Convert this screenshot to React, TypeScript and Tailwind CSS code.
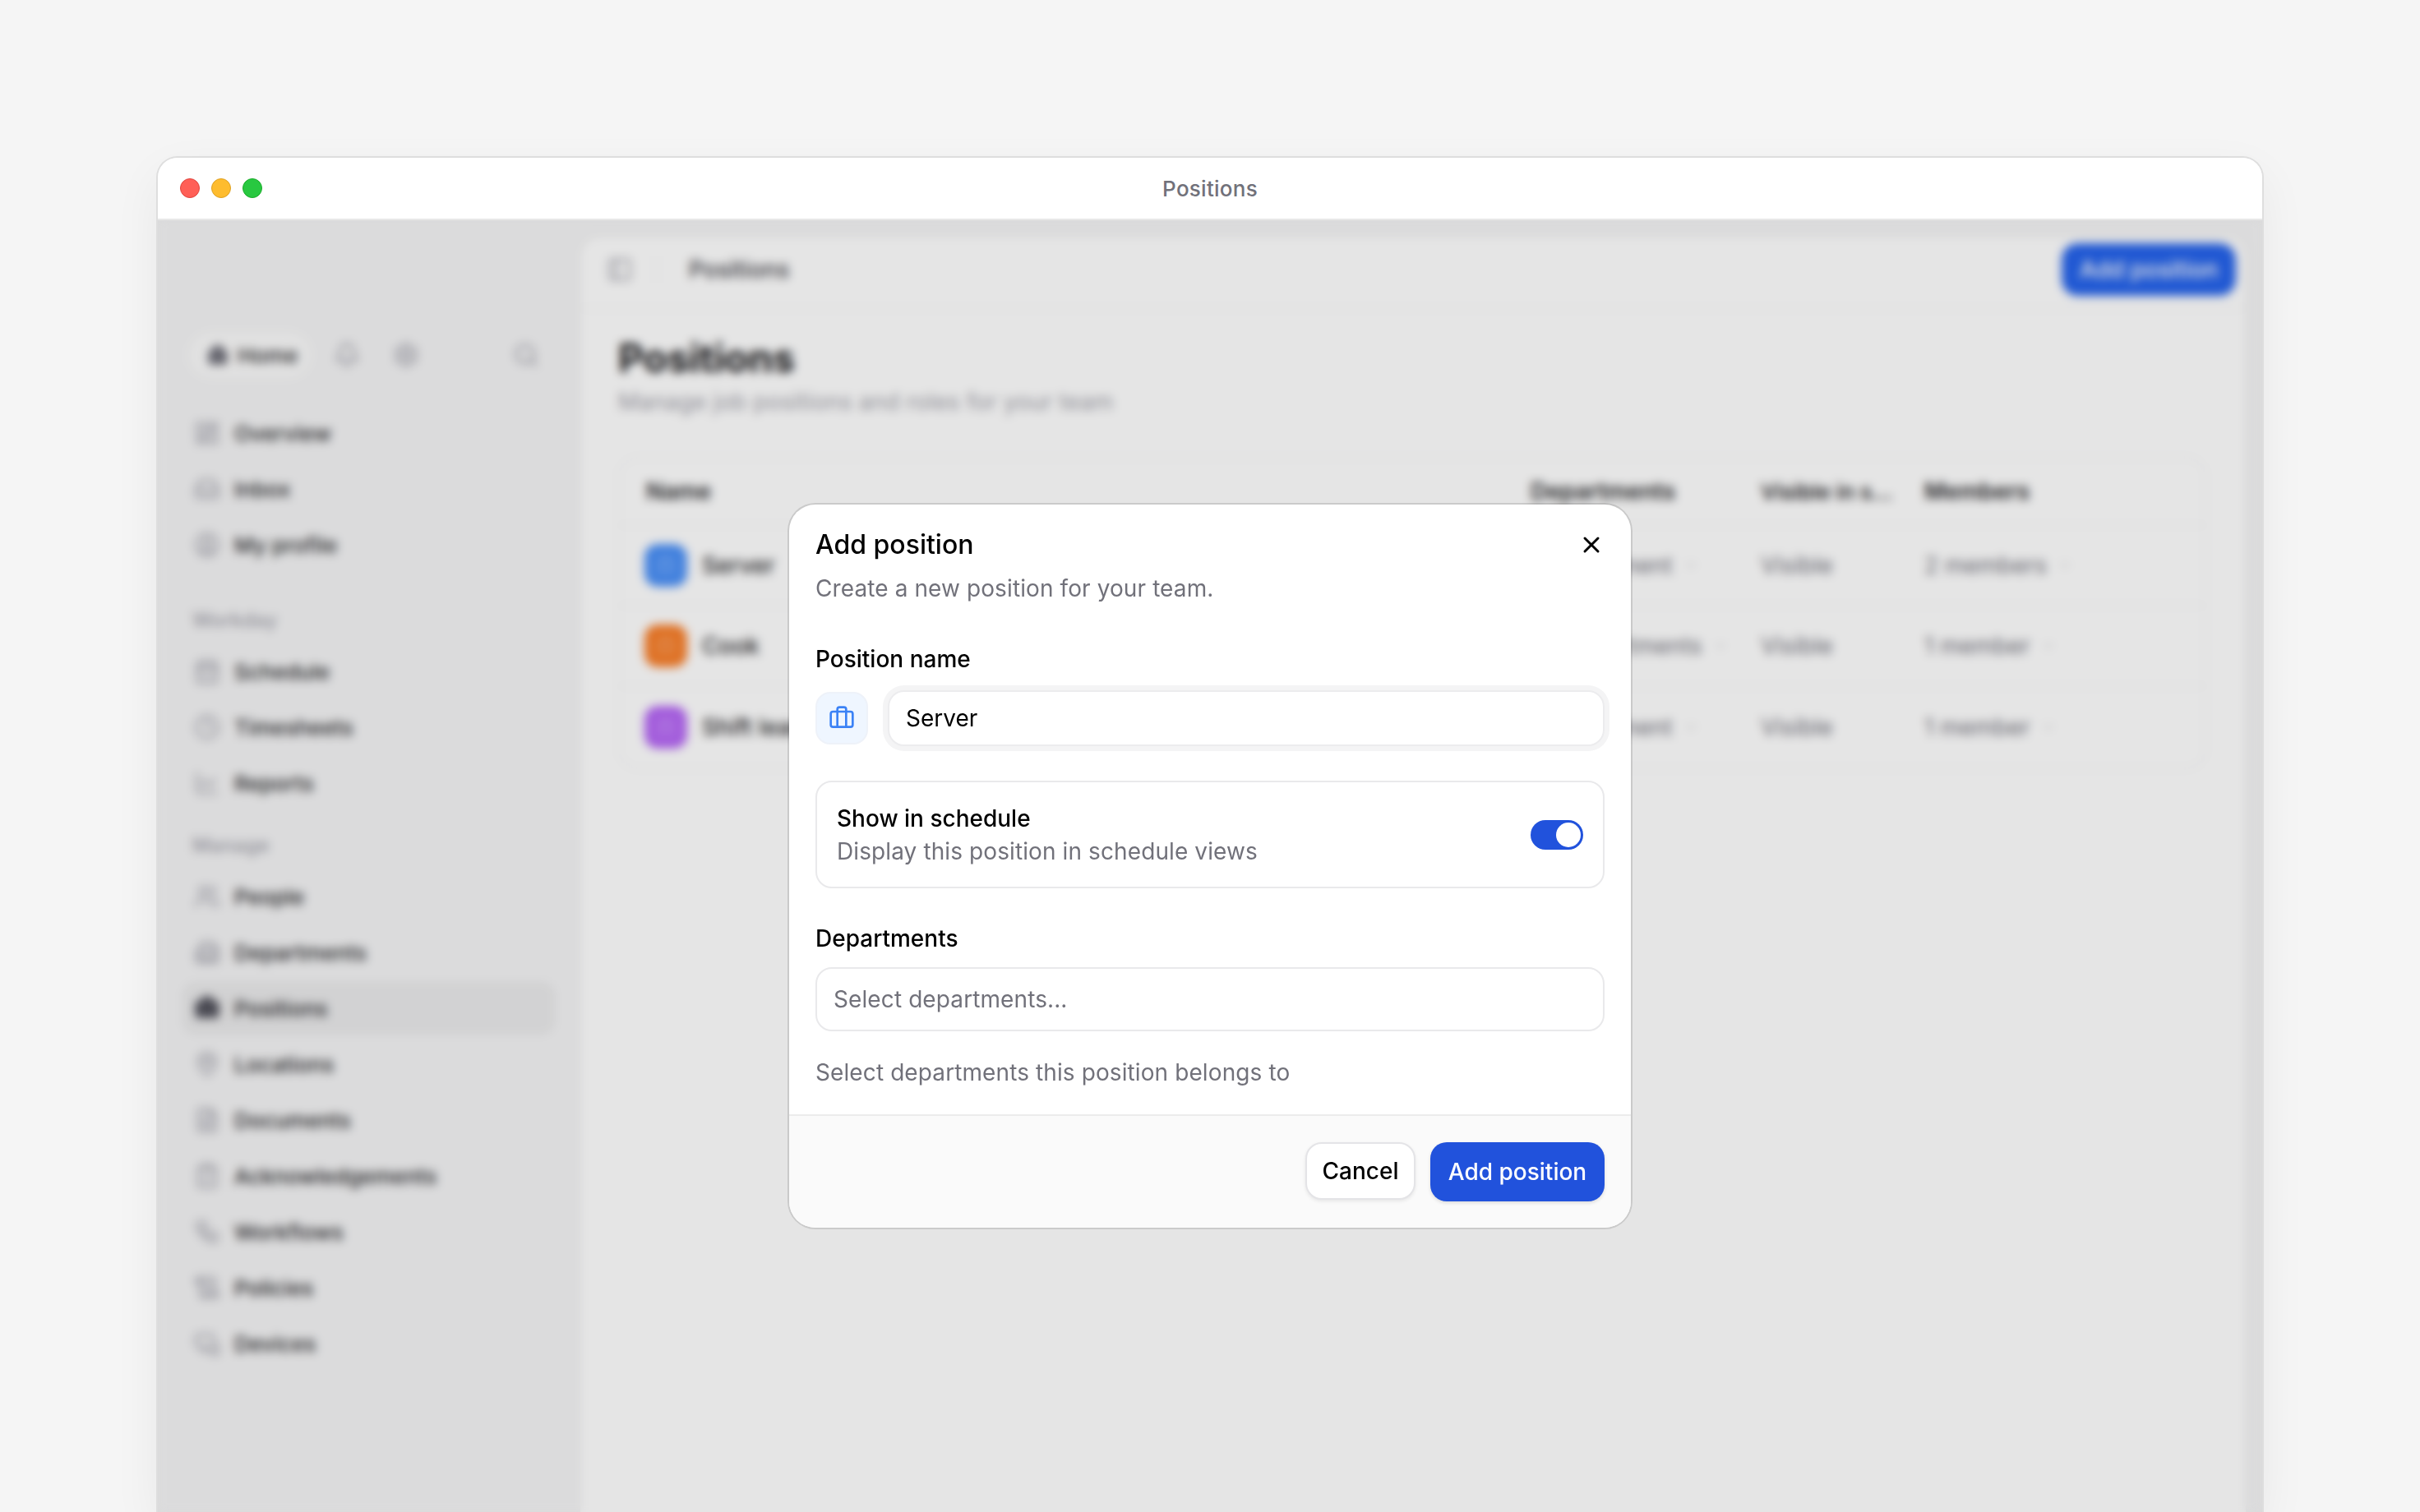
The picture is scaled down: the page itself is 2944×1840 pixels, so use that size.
import React from "react";
import {
  Home, Bell, Settings, Search, LayoutDashboard, Inbox, CircleUser, CalendarDays, Clock, ChartLine,
  Users, Building2, Briefcase, MapPin, FileText, ClipboardCheck, Workflow, ScrollText, MonitorSmartphone,
  PanelLeft, ChevronDown, X,
} from "lucide-react";

const font = { fontFamily: "Inter, 'Noto Sans', sans-serif" };

function NavRow({ icon: Icon, label, active }: { icon: React.ComponentType<any>; label: string; active?: boolean }) {
  return (
    <div className={`my-[2px] flex h-[64px] items-center gap-[17px] rounded-[16px] pl-[14px] text-zinc-800 ${active ? "bg-black/[0.04]" : ""}`}>
      <Icon size={32} className={active ? "text-zinc-600" : "text-zinc-400"} fill={active ? "currentColor" : "none"} />
      <span className="text-[26px] font-medium">{label}</span>
    </div>
  );
}

function SectionLabel({ children, className }: { children: React.ReactNode; className: string }) {
  return <div className={`flex h-[40px] items-center pl-[12px] text-[24px] font-medium tracking-[0.2px] text-zinc-400 ${className}`}>{children}</div>;
}

function Sidebar() {
  return (
    <aside className="w-[514px] shrink-0 pt-[136px]">
      <div className="flex items-center pl-[37px] pr-[38px]">
        <div className="flex h-[56px] w-[150px] items-center gap-[10px] rounded-full bg-white/60 pl-[22px] text-zinc-800">
          <Home size={28} fill="currentColor" className="text-zinc-500" />
          <span className="text-[26px] font-medium">Home</span>
        </div>
        <Bell size={32} className="ml-[27px] text-zinc-400" />
        <Settings size={32} className="ml-[40px] text-zinc-400" />
        <Search size={32} className="ml-auto mr-[12px] text-zinc-400" />
      </div>
      <nav className="mt-[33px] ml-[30px] flex w-[453px] flex-col">
        <NavRow icon={LayoutDashboard} label="Overview" />
        <NavRow icon={Inbox} label="Inbox" />
        <NavRow icon={CircleUser} label="My profile" />
        <SectionLabel className="mt-[38px] mb-[8px]">Workday</SectionLabel>
        <NavRow icon={CalendarDays} label="Schedule" />
        <NavRow icon={Clock} label="Timesheets" />
        <NavRow icon={ChartLine} label="Reports" />
        <SectionLabel className="mt-[22px] mb-[8px]">Manage</SectionLabel>
        <NavRow icon={Users} label="People" />
        <NavRow icon={Building2} label="Departments" />
        <NavRow icon={Briefcase} label="Positions" active />
        <NavRow icon={MapPin} label="Locations" />
        <NavRow icon={FileText} label="Documents" />
        <NavRow icon={ClipboardCheck} label="Acknowledgements" />
        <NavRow icon={Workflow} label="Workflows" />
        <NavRow icon={ScrollText} label="Policies" />
        <NavRow icon={MonitorSmartphone} label="Devices" />
      </nav>
    </aside>
  );
}

const rows = [
  { name: "Server", color: "bg-[#4a90f8]", dept: "1 department", members: "2 members" },
  { name: "Cook", color: "bg-[#f97f2a]", dept: "All departments", members: "1 member" },
  { name: "Shift lead", color: "bg-[#b566f5]", dept: "1 department", members: "1 member" },
];

function Table() {
  return (
    <div className="mt-[47px] w-[1932px] rounded-[24px] border-2 border-zinc-100">
      <div className="grid h-[82px] grid-cols-[1076px_280px_199px_1fr] items-center border-b-2 border-zinc-100 text-[28px] font-semibold whitespace-nowrap text-zinc-800">
        <div className="pl-[32px]">Name</div>
        <div className="pl-[32px]">Departments</div>
        <div className="pl-[32px] text-[26px]">Visible in s...</div>
        <div className="pl-[32px]">Members</div>
      </div>
      {rows.map((r, i) => (
        <div key={r.name} className={`grid h-[98px] grid-cols-[1076px_280px_199px_1fr] items-center text-[28px] whitespace-nowrap text-zinc-500 ${i < 2 ? "border-b-2 border-zinc-100" : ""}`}>
          <div className="flex items-center gap-[18px] pl-[30px]">
            <div className={`flex h-[52px] w-[52px] items-center justify-center rounded-[16px] ${r.color}`}>
              <Briefcase size={24} className="text-white/25" />
            </div>
            <span className="font-medium text-zinc-800">{r.name}</span>
          </div>
          <div className="flex items-center gap-[12px] pl-[32px]">
            {r.dept}
            <ChevronDown size={20} className="text-zinc-300" />
          </div>
          <div className="pl-[32px]">Visible</div>
          <div className="flex items-center gap-[12px] pl-[32px]">
            {r.members}
            <ChevronDown size={20} className="text-zinc-300" />
          </div>
        </div>
      ))}
    </div>
  );
}

function Main() {
  return (
    <main className="mt-[20px] mr-[20px] flex-1 rounded-t-[24px] bg-white shadow-[0_0_10px_rgba(0,0,0,0.05)]">
      <div className="flex h-[88px] items-center border-b-2 border-zinc-100 pb-[6px] pl-[32px] pr-[12px]">
        <PanelLeft size={32} className="text-zinc-400" />
        <div className="ml-[28px] h-[32px] w-[2px] bg-zinc-100" />
        <span className="ml-[38px] text-[28px] font-medium text-zinc-700">Positions</span>
        <div className="ml-auto flex h-[64px] w-[212px] items-center justify-center rounded-[20px] bg-[#2563eb] text-[28px] font-medium text-white">Add position</div>
      </div>
      <div className="pl-[46px] pt-[26px]">
        <h1 className="mt-[1px] text-[48px] leading-[66px] font-bold tracking-[-0.25px] text-zinc-900">Positions</h1>
        <p className="text-[28px] leading-[40px] tracking-[0.1px] text-zinc-400">Manage job positions and roles for your team</p>
        <Table />
      </div>
    </main>
  );
}

function Dialog() {
  return (
    <div className="w-[1024px] overflow-hidden rounded-[32px] bg-white text-black shadow-[0_0_0_2px_rgba(0,0,0,0.12)]">
      <div className="px-[32px] pt-[29px]">
        <div className="flex items-center justify-between">
          <h2 className="text-[32px] leading-[40px] font-medium">Add position</h2>
          <X size={32} strokeWidth={2.25} />
        </div>
        <p className="mt-[13px] text-[28px] leading-[40px] tracking-[0.1px] text-[#71717a]">Create a new position for your team.</p>
        <label className="mt-[46px] block text-[28px] leading-[40px] font-medium">Position name</label>
        <div className="mt-[18px] flex items-center gap-[24px]">
          <div className="flex h-[64px] w-[64px] items-center justify-center rounded-[18px] border-2 border-[#eef2f9] bg-[#eff6ff]">
            <Briefcase size={32} className="text-[#3b82f6]" />
          </div>
          <div className="flex h-[68px] flex-1 items-center rounded-[20px] border-2 border-[#ececee] bg-white pl-[20px] text-[28px] shadow-[0_0_0_6px_#f4f4f5]">Server</div>
        </div>
        <div className="mt-[42px] flex h-[131px] items-center justify-between rounded-[20px] border-2 border-[#e9e9eb] pl-[24px] pr-[24px]">
          <div>
            <div className="text-[28px] leading-[40px] font-medium">Show in schedule</div>
            <div className="text-[28px] leading-[40px] tracking-[0.1px] text-[#71717a]">Display this position in schedule views</div>
          </div>
          <div className="flex h-[36px] w-[64px] items-center justify-end rounded-full bg-[#2152dc] pr-[3px]">
            <div className="h-[30px] w-[30px] rounded-full bg-white" />
          </div>
        </div>
        <label className="mt-[41px] block text-[28px] leading-[40px] font-medium">Departments</label>
        <div className="mt-[15px] flex h-[78px] items-center rounded-[20px] border-2 border-[#e9e9eb] pl-[20px] text-[28px] tracking-[0.1px] text-[#71717a]">Select departments...</div>
        <p className="mt-[30px] text-[28px] leading-[40px] tracking-[0.1px] text-[#71717a]">Select departments this position belongs to</p>
      </div>
      <div className="mt-[31px] flex h-[138px] items-start justify-end gap-[18px] border-t-2 border-[#ececec] bg-[#fafafa] pr-[32px] pt-[32px]">
        <button className="flex h-[70px] w-[134px] items-center justify-center rounded-[20px] border-2 border-[#e4e4e7] bg-white text-[28px] font-medium shadow-[0_2px_4px_rgba(0,0,0,0.08)]">Cancel</button>
        <button className="flex h-[72px] w-[212px] items-center justify-center rounded-[20px] bg-[#2152dc] text-[28px] font-medium text-white shadow-[0_2px_4px_rgba(0,0,0,0.12)]">Add position</button>
      </div>
    </div>
  );
}

export default function App() {
  return (
    <div className="h-[1840px] w-[2944px] overflow-hidden bg-[#f5f5f5] pl-[192px] pt-[192px]" style={font}>
      <div className="flex h-[1648px] w-[2560px] flex-col rounded-t-[24px] bg-[#f4f4f5] shadow-[0_0_0_2px_#dedede,0_20px_60px_rgba(0,0,0,0.06)]">
        <div className="relative flex h-[76px] shrink-0 items-center justify-center rounded-t-[24px] border-b-2 border-[#e8e8e8] bg-white">
          <div className="absolute left-[27px] flex items-center gap-[14px]">
            <span className="h-[24px] w-[24px] rounded-full border border-[#e0443e] bg-[#ff5f57]" />
            <span className="h-[24px] w-[24px] rounded-full border border-[#dea123] bg-[#febc2e]" />
            <span className="h-[24px] w-[24px] rounded-full border border-[#1aab29] bg-[#28c840]" />
          </div>
          <span className="text-[26px] font-medium tracking-[0.25px] text-[#71717a]">Positions</span>
        </div>
        <div className="relative flex flex-1 overflow-hidden">
          <Sidebar />
          <Main />
          <div className="absolute inset-0 flex items-center justify-center bg-black/10 backdrop-blur-[6px]">
            <Dialog />
          </div>
        </div>
      </div>
    </div>
  );
}
